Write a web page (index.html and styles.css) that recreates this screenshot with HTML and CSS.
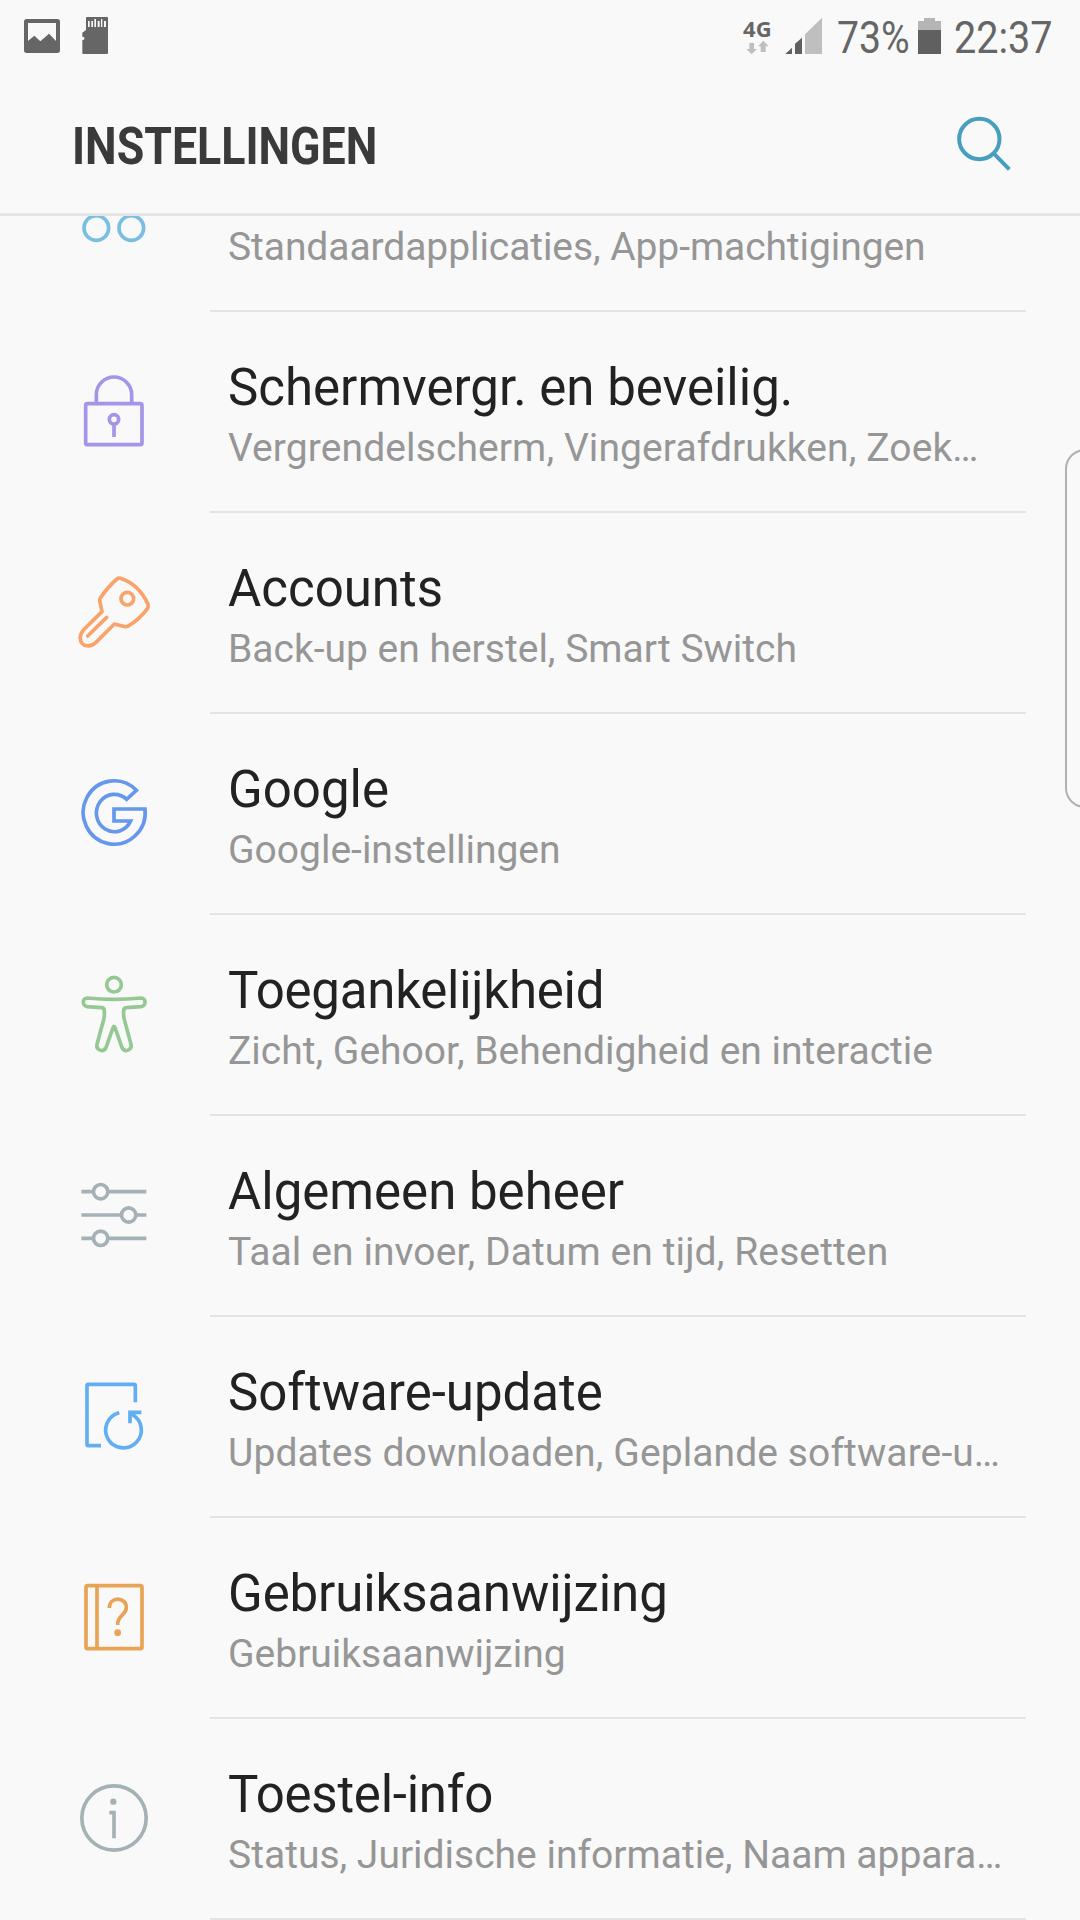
FILE: index.html
```html
<!DOCTYPE html>
<html lang="nl">
<head>
<meta charset="utf-8">
<title>Instellingen</title>
<link rel="stylesheet" href="styles.css">
</head>
<body>
<div class="screen">
  <div class="statusbar">
    <svg class="status-left" viewBox="0 0 400 240">
      <path fill="#666" fill-rule="evenodd" d="M80 57H172Q180 57 180 65V151Q180 159 172 159H80Q72 159 72 151V65Q72 57 80 57ZM84 69V123L103 107L121 124L147 101L168 123V69Z"/>
      <path fill="#666" d="M261 51H321Q324 51 324 54V159Q324 162 321 162H250Q247 162 247 159V121L253 118V112L247 110V98L258 90V54Q258 51 261 51Z"/>
      <path fill="#f9f9f9" d="M264 63h5v18h-5zM274 63h5v18h-5zM283 57h5v24h-5zM293 63h6v18h-6zM303 57h4v24h-4zM312 63h6v18h-6z"/>
    </svg>
    <div class="network">
      <span class="network-label">4G</span>
      <svg class="arrows" viewBox="78 120 70 44"><path fill="#bfbfbf" d="M88 129H102V147H111L95 163L79 147H88ZM122 156H137V139H146L130 122L114 139H122Z"/></svg>
    </div>
    <svg class="signal" viewBox="195 51 114 114"><path fill="#606060" d="M196 162L216 143V162ZM225 162V131L246 113V162Z"/><path fill="#bfbfbf" d="M255 162V103L306 53V162Z"/></svg>
    <span class="percent"><span class="narrow">73%</span></span>
    <svg class="battery" viewBox="594 54 69 108"><path fill="#b5b5b5" d="M612 54H645V63H663V90H594V63H612Z"/><path fill="#606060" d="M594 90H663V162H594Z"/></svg>
    <span class="clock"><span class="narrow">22:37</span></span>
  </div>
  <header class="header">
    <h1 class="heading">INSTELLINGEN</h1>
    <svg class="search" viewBox="708 348 168 168" fill="none" stroke="#479fbf" stroke-width="12"><circle cx="778" cy="417" r="60.5"/><path d="M821 460L868 508"/></svg>
  </header>
  <main class="list">
    <section class="row row-cut">
      <svg class="icon" viewBox="0 0 360 597" fill="none" stroke="#7abfe2" stroke-width="11"><circle cx="109" cy="246" r="37"/><circle cx="214" cy="246" r="37"/><circle cx="109" cy="351" r="37"/><circle cx="214" cy="351" r="37"/></svg>
      <div class="text"><p class="sub tight">Standaardapplicaties, App-machtigingen</p></div>
    </section>
    <section class="row">
      <svg class="icon" viewBox="0 -114 360 597" fill="none" stroke="#a594e8" stroke-width="11"><rect x="77" y="161" width="169" height="123" rx="5"/><path d="M109 161V134a53 53 0 0 1 106 0V161M162 223V261"/><circle cx="162" cy="208" r="14"/></svg>
      <div class="text"><h2 class="title">Schermvergr. en beveilig.</h2><p class="sub loose">Vergrendelscherm, Vingerafdrukken, Zoek…</p></div>
    </section>
    <section class="row">
      <svg class="icon" viewBox="0 -111 360 597" fill="none" stroke="#f9a36b" stroke-width="11" stroke-linejoin="round"><path d="M171 87Q175 83 181 85Q237 103 264 163Q266 169 263 175Q238 209 203 229Q200 231 196 230L163 222L108 277C76 306 44 271 70 240L126 185L119 151Q118 148 121 144Q144 110 171 87Z"/><circle cx="202" cy="146" r="19"/><path stroke-linecap="round" d="M140 202L83 258"/></svg>
      <div class="text"><h2 class="title">Accounts</h2><p class="sub">Back-up en herstel, Smart Switch</p></div>
    </section>
    <section class="row">
      <svg class="icon" viewBox="0 -125 360 597" fill="none" stroke="#6597ec" stroke-width="11"><path d="M229 104A93 95 0 1 0 255 160H162V196H212A54 56 0 1 1 200 131Z"/></svg>
      <div class="text"><h2 class="title">Google</h2><p class="sub">Google-instellingen</p></div>
    </section>
    <section class="row">
      <svg class="icon" viewBox="0 -120 360 597" fill="none" stroke="#96c893" stroke-width="11" stroke-linejoin="round"><circle cx="162" cy="89" r="22"/><path d="M82 129Q162 137 243 129C259 129 259 153 244 155L199 158Q191 159 191 168Q190 182 193 194L213 268C217 285 194 294 186 278L165 218Q162 210 159 218L138 278C130 294 107 285 111 268L131 194Q134 182 133 168Q133 159 125 158L81 155C66 153 66 129 82 129Z"/></svg>
      <div class="text"><h2 class="title tight">Toegankelijkheid</h2><p class="sub">Zicht, Gehoor, Behendigheid en interactie</p></div>
    </section>
    <section class="row">
      <svg class="icon" viewBox="0 -132 360 597" fill="none" stroke="#a5b2b5" stroke-width="11"><path d="M64 95H98M146 95H259M64 165H182M230 165H259M64 235H98M146 235H259"/><circle cx="122" cy="95" r="21.5"/><circle cx="206" cy="165" r="21.5"/><circle cx="122" cy="235" r="21.5"/></svg>
      <div class="text"><h2 class="title">Algemeen beheer</h2><p class="sub loose">Taal en invoer, Datum en tijd, Resetten</p></div>
    </section>
    <section class="row">
      <svg class="icon" viewBox="0 -129 360 597" fill="none" stroke="#62aef3" stroke-width="11"><path d="M226 127V77Q226 73 222 73H85Q81 73 81 77V253Q81 257 85 257H123M178 158A53.500 53.500 0 1 0 216 163M244 157H210V190"/></svg>
      <div class="text"><h2 class="title">Software-update</h2><p class="sub loose">Updates downloaden, Geplande software-u…</p></div>
    </section>
    <section class="row">
      <svg class="icon" viewBox="0 -126 360 597" fill="none" stroke="#e8a354" stroke-width="11"><rect x="78" y="77" width="168" height="189" rx="5"/><path d="M111 77V266M148 144C148 108 199 110 199 142C199 168 172 163 173 195"/><circle cx="173" cy="218" r="10" fill="#e8a354" stroke="none"/></svg>
      <div class="text"><h2 class="title slightly-tight">Gebruiksaanwijzing</h2><p class="sub">Gebruiksaanwijzing</p></div>
    </section>
    <section class="row">
      <svg class="icon" viewBox="0 -123 360 597" fill="none" stroke="#a5b2b5" stroke-width="11"><circle cx="162" cy="174" r="96.500"/><path d="M148 158H162V235"/><circle cx="160" cy="125" r="9.500" fill="#a5b2b5" stroke="none"/></svg>
      <div class="text"><h2 class="title tight">Toestel-info</h2><p class="sub">Status, Juridische informatie, Naam appara…</p></div>
    </section>
  </main>
  <div class="edge-handle"></div>
</div>
</body>
</html>
```
FILE: styles.css
```css
* { box-sizing: border-box; }
body { margin: 0; background: #f9f9f9; font-family: Roboto, sans-serif; }
h1, h2, p { margin: 0; font-weight: 400; white-space: nowrap; }
svg { display: block; flex: none; }
.screen { position: relative; width: 1080px; height: 1920px; overflow: hidden; display: flex; flex-direction: column; }

.statusbar { height: 80px; flex: none; display: flex; align-items: flex-start; color: #666; }
.status-left { width: 133.33px; height: 80px; margin-right: 609.67px; }
.network { width: 30px; margin-top: 17px; }
.network-label { display: block; height: 23px; font: 700 22px/23px "Noto Sans", sans-serif; letter-spacing: 0.3px; }
.arrows { width: 23.33px; height: 14.67px; margin-left: 3px; }
.signal { width: 38px; height: 38px; margin: 17px 0 0 12px; }
.percent, .clock { height: 60px; font-size: 45px; line-height: 60px; margin-top: 8px; }
.narrow { display: inline-block; transform-origin: 0 50%; transform: scaleX(.87); white-space: nowrap; }
.percent { width: 80px; margin-left: 14px; }
.battery { width: 23px; height: 36px; margin: 18px 0 0 1px; }
.clock { width: 110px; margin-left: 13px; }
.clock .narrow { transform: scaleX(.88); }

.header { height: 136px; flex: none; border-bottom: 3px solid #e6e6e6; display: flex; justify-content: space-between; padding: 0 68px 0 72px; }
.heading { font-size: 52px; line-height: 60px; font-weight: 700; color: #3a3a3a; margin-top: 37px; transform-origin: 0 50%; transform: scaleX(.86); }
.search { width: 56px; height: 56px; margin-top: 36px; }

.list { height: 1704px; overflow: hidden; }
.row { height: 201px; display: flex; padding-left: 60px; }
.row-cut { margin-top: -105px; }
.icon { width: 120px; height: 199px; }
.text { width: 816px; margin-left: 30px; padding: 46px 0 0 18px; border-bottom: 2px solid #e4e4e4; }
.title { font-size: 51px; line-height: 60px; height: 60px; color: #222; }
.sub { font-size: 39px; line-height: 46px; height: 46px; margin-top: 7px; color: #969696; }
.row-cut .sub { margin-top: 67px; }
.title.tight { letter-spacing: -0.25px; }
.title.slightly-tight { letter-spacing: -0.1px; }
.sub.tight { letter-spacing: -0.08px; }
.sub.loose { letter-spacing: 0.1px; }

.edge-handle { position: absolute; left: 1065px; top: 449px; width: 40px; height: 359px; border: 2px solid #b0b0b0; border-radius: 20px; }
```
